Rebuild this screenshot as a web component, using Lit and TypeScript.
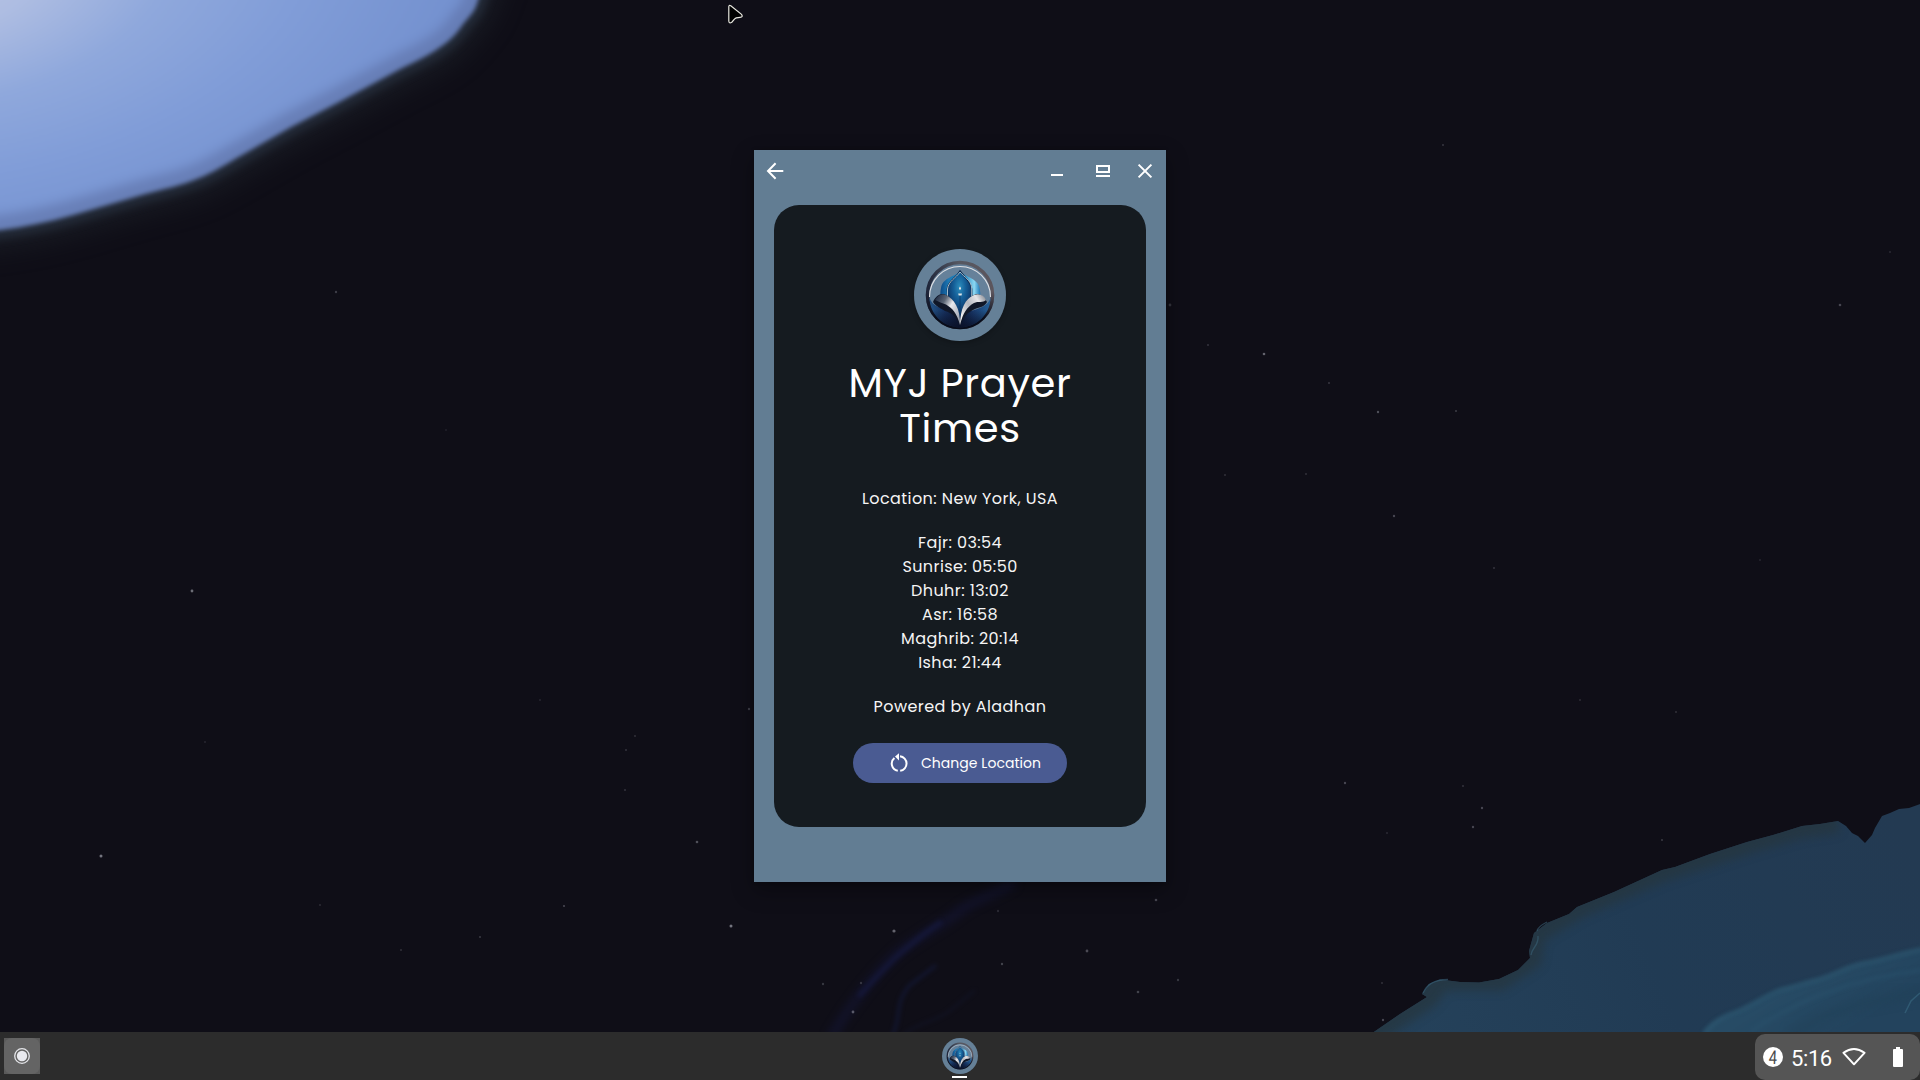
import { LitElement, html, svg, css } from "lit";
import { customElement } from "lit/decorators.js";

interface Star { x: number; y: number; r: number; o: number; }
const star = (x: number, y: number, r: number, o: number): Star => ({ x, y, r, o });

const STARS: Star[] = [
  star(336, 292, 1.2, 0.25), star(192, 591, 1.4, 0.5), star(101, 856, 1.5, 0.55),
  star(1264, 354, 1.3, 0.45), star(1443, 145, 1.1, 0.2), star(1840, 305, 1.3, 0.3),
  star(1378, 412, 1.2, 0.35), star(1456, 411, 1, 0.25), star(1170, 305, 1.4, 0.2),
  star(1394, 516, 1.2, 0.3), star(1329, 383, 1, 0.22), star(1208, 345, 1, 0.2),
  star(1225, 475, 1, 0.18), star(1306, 474, 1, 0.18), star(1494, 568, 1, 0.2),
  star(731, 926, 1.5, 0.55), star(894, 931, 1.6, 0.45), star(853, 1012, 1.4, 0.4),
  star(823, 984, 1.2, 0.22), star(861, 983, 1.2, 0.2), star(1002, 964, 1.2, 0.28),
  star(1087, 951, 1.4, 0.32), star(998, 911, 1.2, 0.15),
  star(1138, 992, 1.3, 0.28), star(1156, 900, 1.3, 0.3), star(1178, 980, 1.2, 0.22),
  star(697, 842, 1.3, 0.35), star(564, 906, 1.1, 0.3), star(480, 937, 1.1, 0.22),
  star(401, 950, 1, 0.18), star(626, 750, 1, 0.2), star(625, 790, 1, 0.2),
  star(749, 709, 1.2, 0.25), star(635, 736, 1, 0.18), star(1345, 783, 1.2, 0.3),
  star(1463, 786, 1, 0.2), star(1482, 808, 1.2, 0.3), star(1473, 827, 1.2, 0.3),
  star(1387, 833, 1, 0.15), star(1662, 840, 1.1, 0.22), star(1676, 712, 1, 0.18),
  star(1580, 700, 1, 0.16), star(1382, 983, 1, 0.18), star(1383, 1020, 1.2, 0.3),
  star(1890, 252, 1, 0.15), star(540, 700, 1, 0.13), star(320, 905, 1, 0.16),
  star(205, 742, 1, 0.13), star(446, 430, 1, 0.1), star(1760, 560, 1, 0.13),
];

@customElement("space-wallpaper")
class SpaceWallpaper extends LitElement {
  static styles = css`
    :host { display: block; width: 100%; height: 100%; }
    svg { display: block; width: 100%; height: 100%; }
  `;
  render() {
    return html`<svg viewBox="0 0 1920 1080" preserveAspectRatio="none" aria-hidden="true">
      <defs>
        <radialGradient id="planet" gradientUnits="userSpaceOnUse" cx="-60" cy="-60" r="680" gradientTransform="rotate(-8) scale(1 .54)">
          <stop offset="0" stop-color="#b9c4e6"/>
          <stop offset=".15" stop-color="#aebde2"/>
          <stop offset=".35" stop-color="#8fa8dc"/>
          <stop offset=".55" stop-color="#819dd8"/>
          <stop offset=".8" stop-color="#7491cf"/>
          <stop offset="1" stop-color="#6b87c5"/>
        </radialGradient>
        <linearGradient id="sea" gradientUnits="userSpaceOnUse" x1="1380" y1="1040" x2="1900" y2="820">
          <stop offset="0" stop-color="#25425b"/>
          <stop offset=".5" stop-color="#213b54"/>
          <stop offset="1" stop-color="#233a52"/>
        </linearGradient>
        <linearGradient id="shoal" gradientUnits="userSpaceOnUse" x1="1800" y1="980" x2="1840" y2="1040">
          <stop offset="0" stop-color="#274b65"/>
          <stop offset="1" stop-color="#23435d"/>
        </linearGradient>
        <filter id="b2" x="-10%" y="-10%" width="120%" height="120%" color-interpolation-filters="sRGB"><feGaussianBlur stdDeviation="2"/></filter>
        <filter id="b1" x="-10%" y="-10%" width="120%" height="120%" color-interpolation-filters="sRGB"><feGaussianBlur stdDeviation=".7"/></filter>
        <filter id="b6" x="-20%" y="-20%" width="140%" height="140%" color-interpolation-filters="sRGB"><feGaussianBlur stdDeviation="5"/></filter>
        <filter id="b14" x="-20%" y="-20%" width="140%" height="140%" color-interpolation-filters="sRGB"><feGaussianBlur stdDeviation="12"/></filter>
        <clipPath id="land"><path d=${SpaceWallpaper.land}/></clipPath>
        <clipPath id="globe"><path d=${SpaceWallpaper.globe}/></clipPath>
      </defs>
      <rect width="1920" height="1080" fill="#0f0e17"/>
      <path d=${SpaceWallpaper.globe} fill="none" stroke="#1a1d25" stroke-width="40" opacity=".8" filter="url(#b14)"/>
      <path d=${SpaceWallpaper.globe} fill="none" stroke="#27303f" stroke-width="16" opacity=".85" filter="url(#b6)"/>
      <g filter="url(#b2)">
        <path d=${SpaceWallpaper.globe} fill="url(#planet)"/>
        <g clip-path="url(#globe)">
          <path d=${SpaceWallpaper.globe} fill="none" stroke="#6074aa" stroke-width="30" opacity=".65" filter="url(#b6)"/>
        </g>
      </g>
      <g fill="none" stroke-linecap="round">
        <path d="M832 1036C850 1005 868 982 892 958C915 937 945 925 962 909C980 898 998 892 1012 884" stroke="#15173a" stroke-width="8" opacity=".65" filter="url(#b6)"/>
        <path d="M860 995C875 978 885 968 896 957C910 945 925 932 940 923" stroke="#161a42" stroke-width="5" opacity=".65" filter="url(#b2)"/>
        <path d="M893 1034C902 1015 894 1003 910 985L935 966" stroke="#141a3c" stroke-width="3.500" opacity=".65" filter="url(#b2)"/>
        <path d="M904 1034C922 1020 938 1022 952 1009L974 991" stroke="#14182f" stroke-width="2.500" opacity=".5" filter="url(#b2)"/>
        <path d="M447 815V870" stroke="#151a2c" stroke-width="7" opacity=".4" filter="url(#b6)"/>
      </g>
      <path d=${SpaceWallpaper.land} fill="url(#sea)" filter="url(#b1)"/>
      <g clip-path="url(#land)">
        <path d="M1368 1036L1427 997L1440 979L1499 979L1530 958L1534 933L1577 907L1662 870L1747 842L1802 826L1838 821" fill="none" stroke="#26363f" stroke-width="24" filter="url(#b6)" opacity=".75"/>
        <path d="M1704 1032C1712 1022 1720 1018 1728 1015C1748 1009 1760 998 1780 990C1795 987 1804 983 1817 980C1834 976 1846 966 1865 963C1884 960 1900 953 1925 949V1090H1690Z" fill="url(#shoal)" filter="url(#b2)"/>
        <path d="M1704 1034C1712 1023 1720 1019 1728 1015C1748 1009 1760 998 1780 990C1795 987 1804 983 1817 980C1834 976 1846 966 1865 963C1884 960 1900 953 1925 949" fill="none" stroke="#2f5c75" stroke-width="4" opacity=".7" filter="url(#b2)"/>
        <path d="M1750 1032C1790 1004 1850 978 1925 970" fill="none" stroke="#2b5570" stroke-width="3" opacity=".55" filter="url(#b2)"/>
        <path d="M1790 1034C1830 1010 1870 998 1940 992" fill="none" stroke="#214158" stroke-width="10" opacity=".6" filter="url(#b6)"/>
        <path d="M1905 1013L1911 1001L1920 993" fill="none" stroke="#346079" stroke-width="1.500" opacity=".8" filter="url(#b1)"/>
      </g>
      <path d="M1423 993C1427 984 1434 980 1448 979.500" fill="none" stroke="#38637a" stroke-width="1.300" opacity=".6"/>
      <path d="M1531 955C1532 947 1539 946 1538 936M1537 931C1538 927 1541 925 1547 922" fill="none" stroke="#386076" stroke-width="1.300" opacity=".6"/>
      <g fill="#c9cbd6">${STARS.map((s) => svg`<circle cx=${s.x} cy=${s.y} r=${s.r} opacity=${s.o}/>`)}</g>
    </svg>`;
  }
  static globe = "M-60 -60H500L478 0C475 12 470 15 463 24C455 36 448 42 436 50C425 57 414 62 402 68L339 102L291 127L242 155C226 164 212 173 199 178C180 186 163 189 145 194L73 215C48 222 24 227 0 230L-60 236Z";
  static land = "M1368 1036L1400 1014L1427 997L1422 994L1429 984L1440 979.500L1460 982L1479 982.500L1499 979L1518 970L1530 958L1529 951L1534 933L1547 923L1569 914L1577 907L1614 892L1662 870L1675 867L1710 854L1747 842L1773 835L1802 826L1820 824L1838 821L1846 826L1852 833L1858 836L1865 843L1872 835L1875 828L1882 816L1890 813L1899 809L1909 808L1940 797V1090H1368Z";
}

@customElement("lotus-logo")
class LotusLogo extends LitElement {
  static styles = css`
    :host { display: block; }
    svg { display: block; width: 100%; height: 100%; }
  `;
  render() {
    return html`<svg viewBox="0 0 92 92" role="img" aria-label="Logo">
      <defs>
        <linearGradient id="ring" x1="0" y1=".3" x2="1" y2=".2">
          <stop offset="0" stop-color="#20263a"/><stop offset=".5" stop-color="#555862"/><stop offset="1" stop-color="#5c555c"/>
        </linearGradient>
        <linearGradient id="low" x1="0" y1="0" x2="0" y2="1">
          <stop offset=".45" stop-color="#0b1020" stop-opacity="0"/><stop offset=".85" stop-color="#080c1a"/>
        </linearGradient>
        <linearGradient id="wall" x1="0" y1="0" x2="1" y2="0">
          <stop offset="0" stop-color="#0c4a86"/><stop offset=".2" stop-color="#1d78b4"/><stop offset=".6" stop-color="#2388c0"/><stop offset=".85" stop-color="#8bd7f2"/><stop offset="1" stop-color="#1b74b4"/>
        </linearGradient>
        <radialGradient id="dome" cx=".5" cy=".32" r=".6">
          <stop offset="0" stop-color="#2c8dbd"/><stop offset=".4" stop-color="#155f98"/><stop offset="1" stop-color="#092b5c"/>
        </radialGradient>
        <linearGradient id="leafL" x1="0" y1="0" x2="1" y2=".7">
          <stop offset="0" stop-color="#15203a"/><stop offset=".35" stop-color="#596474"/><stop offset=".6" stop-color="#e9eaee"/><stop offset="1" stop-color="#a3a9b6"/>
        </linearGradient>
        <linearGradient id="leafR" x1="1" y1="0" x2="0" y2=".7">
          <stop offset="0" stop-color="#777b84"/><stop offset=".3" stop-color="#e4e4e8"/><stop offset=".6" stop-color="#b4b7bf"/><stop offset="1" stop-color="#f2f2f4"/>
        </linearGradient>
        <linearGradient id="navy" x1="0" y1="0" x2="1" y2="0">
          <stop offset="0" stop-color="#235487"/><stop offset=".25" stop-color="#16305e"/><stop offset=".5" stop-color="#0c1735"/><stop offset=".72" stop-color="#18386a"/><stop offset="1" stop-color="#25629b"/>
        </linearGradient>
        <linearGradient id="deep" x1="0" y1="0" x2="0" y2="1">
          <stop offset=".4" stop-color="#0a1026" stop-opacity="0"/><stop offset="1" stop-color="#0a1026" stop-opacity=".85"/>
        </linearGradient>
      </defs>
      <circle cx="46" cy="46" r="46" fill="#658097"/>
      <circle cx="46" cy="46" r="32.500" fill="#66819a" stroke="url(#ring)" stroke-width="3.600"/>
      <circle cx="46" cy="46" r="32.500" fill="none" stroke="url(#low)" stroke-width="3.600"/>
      <path d="M15.500 48A30.500 30.500 0 0 1 76.500 48" fill="none" stroke="#dfe0e4" stroke-width="1.100"/>
      <path d="M15.500 49C16 65 28 77.500 46 78.500C64 77.500 76 65 76.500 49C74 57 65 60 56 62L46 70L36 61C27 59 19 58 15.500 49Z" fill="url(#navy)"/>
      <path d="M15.500 49C16 65 28 77.500 46 78.500C64 77.500 76 65 76.500 49C74 57 65 60 56 62L46 70L36 61C27 59 19 58 15.500 49Z" fill="url(#deep)"/>
      <path d="M46 22C41 28 29 28 27 39C26 43 26 48 28 52H65C67 48 66.500 42 65 37C62 29 51 28 46 22Z" fill="url(#wall)"/>
      <path d="M46 22C42 29 34 32 33.300 40C33 48 34 54 46 72C58 54 58.500 48 57.700 40C57 32 50 28 46 22Z" fill="url(#dome)" stroke="#0c2a4e" stroke-width="1.400"/>
      <path d="M46 23C42 29 34.500 32 33.500 40V48M46 23C50 28 57 31 57.700 39V49" fill="none" stroke="#b7ccd8" stroke-width=".9"/>
      <path d="M46 45V72" stroke="#0b3768" stroke-width=".8"/>
      <path d="M19 53C22 47 26 44 31 45.500C39 49 46 58 46 77C43 68 38 64 31 62C27 59 22 58 19 53Z" fill="#101728"/>
      <path d="M73 53C69 47 65 44 61 45.500C53 49 46 58 46 77C49 68 54 63 61 60C66 58 70 58 73 53Z" fill="#101728"/>
      <path d="M21 51C24 46 28 44 32 46C40 50 46.500 59 46 76C43 64 38 59 32 55.500C28 54 25 53 21 51Z" fill="url(#leafL)"/>
      <path d="M72 51C70 46 65 44 60 46C51 50 46.500 59 46 76C49 64 53 58 60 54C64 52 69 54 72 51Z" fill="url(#leafR)"/>
      <path d="M44.200 44.500H48L47.500 46.500H44.700ZM45 39L46 37.500L47 39V40.500H45Z" fill="#dfe5e8"/>
    </svg>`;
  }
}

const TIMES: [string, string][] = [
  ["Fajr", "03:54"],
  ["Sunrise", "05:50"],
  ["Dhuhr", "13:02"],
  ["Asr", "16:58"],
  ["Maghrib", "20:14"],
  ["Isha", "21:44"],
];

@customElement("app-root")
class AppRoot extends LitElement {
  static styles = css`
    :host { display: block; width: 1920px; height: 1080px; }
    .desktop { position: relative; width: 1920px; height: 1080px; overflow: hidden; display: flex; flex-direction: column; font-family: "Poppins", "Inter", "Liberation Sans", sans-serif; color: #fff; }
    .wallpaper { position: absolute; inset: 0; }
    .window { position: absolute; left: 754px; top: 150px; width: 412px; height: 732px; background: #627d93; display: flex; flex-direction: column; box-shadow: 0 8px 20px rgba(0,0,0,.35), 0 0 4px rgba(0,0,0,.2); }
    .titlebar { height: 42px; flex: none; display: flex; align-items: center; padding: 0 9px; }
    .titlebar svg { display: block; width: 24px; height: 24px; }
    .spacer { flex: 1; }
    .min { margin-right: 22px; }
    .max { margin-right: 18px; }
    .card { margin: 13px 20px 0; height: 622px; box-sizing: border-box; padding: 44px 50px 0; background: #151b20; border-radius: 25px; display: flex; flex-direction: column; align-items: center; text-align: center; }
    .logo { width: 92px; height: 92px; border-radius: 50%; box-shadow: 0 2px 5px rgba(0,0,0,.25); }
    .title { margin: 20px 0 0; font-size: 40px; font-weight: 400; line-height: 45px; letter-spacing: .6px; }
    .info { margin-top: 36px; font-size: 16px; line-height: 24px; letter-spacing: .42px; color: #f5f5f5; white-space: nowrap; }
    .times { margin: 20px 0; }
    .change { margin-top: 24px; width: 214px; height: 40px; border: 0; padding: 0 0 0 34px; border-radius: 20px; background: #4a5b92; color: #fff; display: flex; align-items: center; font: 14px/20px "Poppins", "Inter", sans-serif; letter-spacing: .04px; white-space: nowrap; }
    .change svg { width: 24px; height: 24px; margin-right: 10px; flex: none; }
    .shelf { position: relative; margin-top: auto; height: 48px; background: #2c2c2c; display: grid; grid-template-columns: 1fr 36px 1fr; }
    .launcher { width: 36px; height: 36px; margin: 6px 0 0 4px; background: #5a5a5a; }
    .launcher svg { display: block; }
    .app { display: flex; flex-direction: column; align-items: center; padding-top: 6px; }
    .app lotus-logo { width: 36px; height: 36px; }
    .mark { width: 15px; height: 2px; margin-top: 2px; margin-right: 1px; background: #fff; }
    .tray { justify-self: end; width: 165px; height: 46px; margin-top: 2px; border-radius: 10px; background: #555; display: flex; align-items: center; box-sizing: border-box; padding-left: 8px; font-family: Roboto, sans-serif; }
    .badge { width: 20px; height: 20px; border-radius: 50%; background: #fff; color: #4b4b4b; text-align: center; }
    .count { display: block; font-size: 19px; line-height: 21px; transform: scaleX(.78) skewX(-3deg); }
    .clock { margin-left: 8px; margin-top: 4px; width: 42px; font-size: 22px; line-height: 24px; letter-spacing: -.4px; }
    .wifi { margin-left: 9px; }
    .battery { margin-left: 26px; }
    .tray svg { display: block; flex: none; }
    .cursor { position: absolute; left: 727px; top: 4px; }
  `;
  render() {
    return html`<div class="desktop">
      <space-wallpaper class="wallpaper"></space-wallpaper>
      <section class="window">
        <header class="titlebar">
          <svg viewBox="0 0 24 24" fill="none" stroke="#fff" stroke-width="2"><path d="M20.300 12H5M12.600 4.300L5 12L12.600 19.700"/></svg>
          <span class="spacer"></span>
          <svg class="min" viewBox="0 0 24 24"><path fill="#fff" d="M6 15h12v2H6z"/></svg>
          <svg class="max" viewBox="0 0 24 24"><path fill="#fff" fill-rule="evenodd" d="M5 6h14v8H5zM7 8v4h10V8zM5 16h14v2H5z"/></svg>
          <svg viewBox="0 0 24 24" fill="none" stroke="#fff" stroke-width="2"><path d="M5.600 5.600L18.400 18.400M18.400 5.600L5.600 18.400"/></svg>
        </header>
        <main class="card">
          <lotus-logo class="logo"></lotus-logo>
          <h1 class="title">MYJ Prayer Times</h1>
          <div class="info">
            <div>Location: New York, USA</div>
            <div class="times">${TIMES.map(([name, time]) => html`<div>${name}: ${time}</div>`)}</div>
            <div>Powered by Aladhan</div>
          </div>
          <button class="change">
            <svg viewBox="0 0 24 24" fill="none" stroke="#fff" stroke-width="2"><path d="M13 5.300A7.300 7.300 0 0 1 13.200 19.800M10.800 19.800A7.300 7.300 0 0 1 7.400 7"/><path d="M12 2.200V9.400L8 5.600Z" fill="#fff" stroke="none"/></svg>
            Change Location
          </button>
        </main>
      </section>
      <footer class="shelf">
        <div class="launcher"><svg width="36" height="36" viewBox="0 0 36 36"><rect width="36" height="36" rx="8" fill="#646464"/><circle cx="18" cy="18" r="7.300" fill="none" stroke="#e4e5e9" stroke-width="1.300"/><circle cx="18" cy="18" r="5.200" fill="#e8e9ee"/></svg></div>
        <div class="app"><lotus-logo></lotus-logo><span class="mark"></span></div>
        <div class="tray">
          <span class="badge"><span class="count">4</span></span>
          <span class="clock">5:16</span>
          <svg class="wifi" width="24" height="20" viewBox="0 0 24 20" fill="none" stroke="#fff" stroke-width="2"><path d="M1.500 5.800Q12 -2 22.500 5.800L12 17.300Z" stroke-linejoin="round"/></svg>
          <svg class="battery" width="12" height="20" viewBox="0 0 12 20"><path fill="#fff" d="M4 0h4v2h2a1 1 0 0 1 1 1v16a1 1 0 0 1-1 1H2a1 1 0 0 1-1-1V3a1 1 0 0 1 1-1h2z"/></svg>
        </div>
      </footer>
      <svg class="cursor" width="18" height="22" viewBox="0 0 18 22"><path d="M1.800 2.800Q1.800 .6 3.800 1.800L14.500 10.300Q16.500 13 13 13.300L9.300 13.900Q8 14.300 7.200 15.500L4.800 18.200Q2 20 1.800 17Z" fill="#000" stroke="#e8e8e0" stroke-width="1.200"/></svg>
    </div>`;
  }
}
